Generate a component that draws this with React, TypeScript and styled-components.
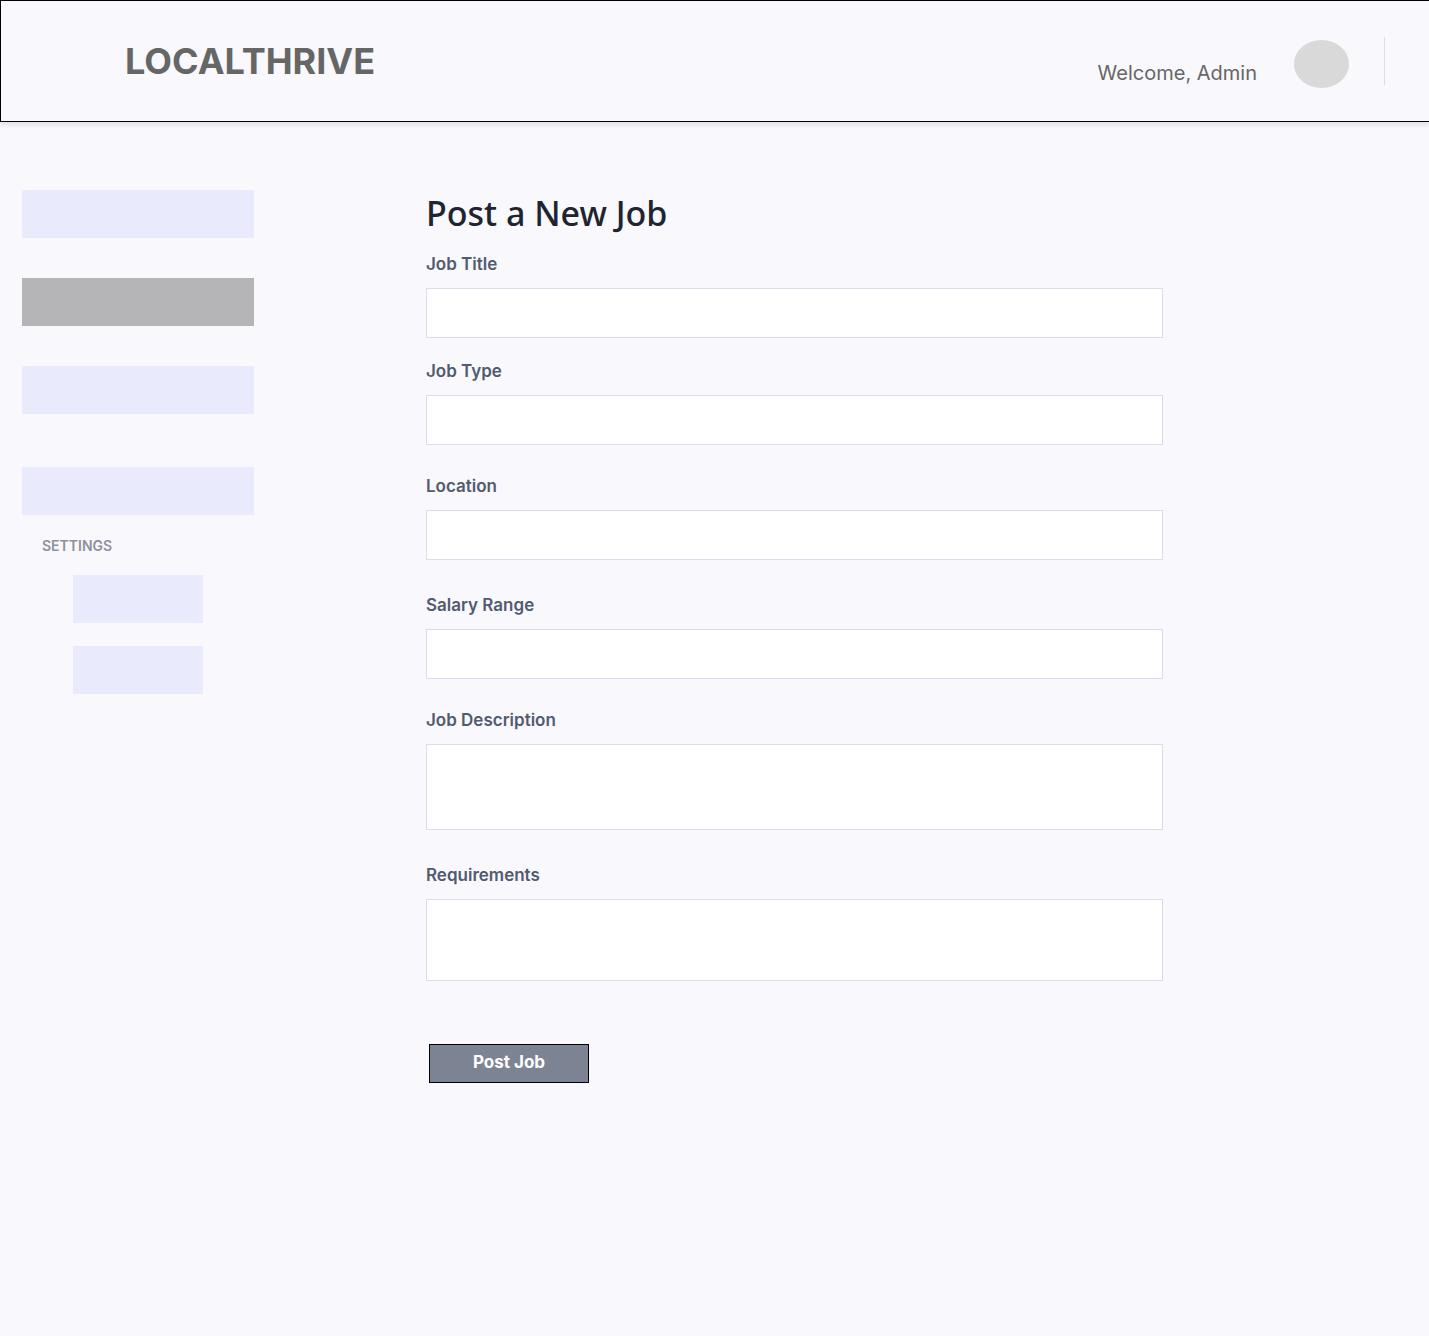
import React from "react";
import styled, { createGlobalStyle } from "styled-components";

const GlobalStyle = createGlobalStyle`
  *, *::before, *::after { box-sizing: border-box; }
  body {
    margin: 0;
    background: #f8f8fd;
    font-family: Inter, "Liberation Sans", sans-serif;
  }
`;

const Page = styled.div`
  min-height: 100vh;
`;

const Header = styled.header`
  display: flex;
  align-items: center;
  justify-content: space-between;
  height: 122px;
  padding: 0 44px 0 124px;
  border: 1px solid #000;
  border-right: 0;
  box-shadow: 0 4px 4px rgba(0, 0, 0, 0.08);
`;

const Logo = styled.div`
  color: #666;
  font-size: 36px;
  font-weight: 700;
  line-height: 40px;
`;

const HeaderSide = styled.div`
  display: flex;
  align-items: center;
  gap: 35px;
`;

const Account = styled.div`
  display: flex;
  align-items: flex-end;
  gap: 37px;
  padding-top: 6px;
`;

const Welcome = styled.span`
  color: #666;
  font-size: 20px;
  line-height: 30px;
`;

const Avatar = styled.div`
  width: 55px;
  height: 48px;
  border-radius: 50%;
  background: #d9d9d9;
`;

const Divider = styled.div`
  width: 1px;
  height: 48px;
  background: #d6ddeb;
`;

const Body = styled.div`
  display: flex;
  align-items: flex-start;
  gap: 172px;
  padding: 68px 266px 68px 22px;
`;

const Sidebar = styled.nav`
  display: flex;
  flex: 0 0 232px;
  flex-direction: column;
`;

const NavList = styled.ul`
  display: flex;
  flex-direction: column;
  gap: 40px;
  margin: 0 0 53px;
  padding: 0;
  list-style: none;
`;

const NavItem = styled.li<{ $active?: boolean }>`
  height: 48px;
  background: ${(p) => (p.$active ? "#b5b5b7" : "#e9ebfd")};
`;

const NavExtra = styled.div`
  height: 48px;
  background: #e9ebfd;
`;

const SettingsTitle = styled.h2`
  margin: 21px 20px 19px;
  color: #8f9199;
  font-size: 14px;
  font-weight: 600;
  line-height: 20px;
`;

const SettingsList = styled.ul`
  display: flex;
  flex-direction: column;
  align-items: center;
  gap: 23px;
  margin: 0;
  padding: 0;
  list-style: none;
`;

const SettingsItem = styled.li`
  width: 130px;
  height: 48px;
  background: #e9ebfd;
`;

const Main = styled.main`
  flex: 1;
  min-width: 0;
`;

const Title = styled.h1`
  margin: 0 0 16px;
  color: #202430;
  font-family: "Noto Sans", sans-serif;
  font-size: 34px;
  font-weight: 500;
  line-height: 46px;
`;

const Form = styled.form`
  display: flex;
  flex-direction: column;
`;

const Field = styled.div<{ $gap: number }>`
  display: flex;
  flex-direction: column;
  gap: 12px;
  margin-bottom: ${(p) => p.$gap}px;
`;

const Label = styled.label`
  color: #515b6f;
  font-size: 17px;
  font-weight: 600;
  line-height: 24px;
`;

const TextInput = styled.input`
  width: 100%;
  height: 50px;
  padding: 0 16px;
  border: 1px solid #d6ddeb;
  border-radius: 0;
  background: #fff;
  font: inherit;
`;

const TextArea = styled.textarea<{ $height: number }>`
  display: block;
  width: 100%;
  height: ${(p) => p.$height}px;
  padding: 12px 16px;
  border: 1px solid #d6ddeb;
  border-radius: 0;
  background: #fff;
  font: inherit;
  resize: none;
`;

const SubmitButton = styled.button`
  align-self: flex-start;
  width: 160px;
  height: 39px;
  margin-left: 3px;
  padding: 0 0 3px;
  border: 1px solid #000;
  border-radius: 0;
  background: #7c8493;
  color: #fff;
  font-family: inherit;
  font-size: 17px;
  font-weight: 700;
  line-height: 24px;
`;

export default function App() {
  return (
    <Page>
      <GlobalStyle />
      <Header>
        <Logo>LOCALTHRIVE</Logo>
        <HeaderSide>
          <Account>
            <Welcome>Welcome, Admin</Welcome>
            <Avatar />
          </Account>
          <Divider />
        </HeaderSide>
      </Header>
      <Body>
        <Sidebar>
          <NavList>
            <NavItem />
            <NavItem $active />
            <NavItem />
          </NavList>
          <NavExtra />
          <SettingsTitle>SETTINGS</SettingsTitle>
          <SettingsList>
            <SettingsItem />
            <SettingsItem />
          </SettingsList>
        </Sidebar>
        <Main>
          <Title>Post a New Job</Title>
          <Form onSubmit={(e) => e.preventDefault()}>
            <Field $gap={21}>
              <Label htmlFor="title">Job Title</Label>
              <TextInput id="title" type="text" />
            </Field>
            <Field $gap={29}>
              <Label htmlFor="type">Job Type</Label>
              <TextInput id="type" type="text" />
            </Field>
            <Field $gap={33}>
              <Label htmlFor="location">Location</Label>
              <TextInput id="location" type="text" />
            </Field>
            <Field $gap={29}>
              <Label htmlFor="salary">Salary Range</Label>
              <TextInput id="salary" type="text" />
            </Field>
            <Field $gap={33}>
              <Label htmlFor="description">Job Description</Label>
              <TextArea id="description" $height={86} />
            </Field>
            <Field $gap={63}>
              <Label htmlFor="requirements">Requirements</Label>
              <TextArea id="requirements" $height={82} />
            </Field>
            <SubmitButton type="submit">Post Job</SubmitButton>
          </Form>
        </Main>
      </Body>
    </Page>
  );
}
